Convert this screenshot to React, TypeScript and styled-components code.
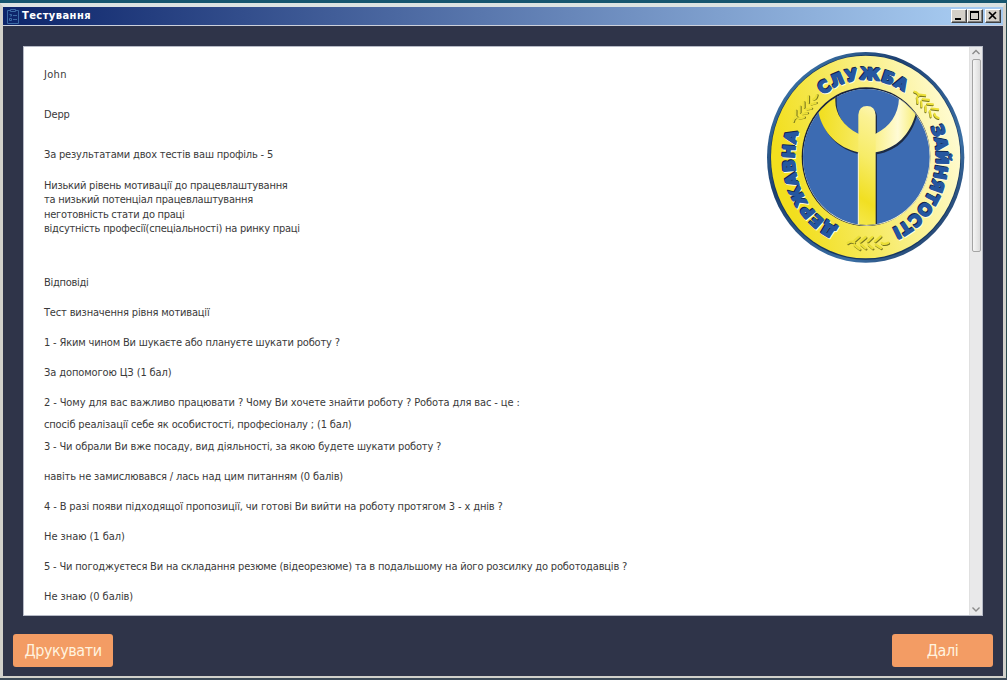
import React from "react";
import styled, { createGlobalStyle } from "styled-components";

const Global = createGlobalStyle`
  * { box-sizing: border-box; }
  html, body, #root { height: 100%; }
  body { margin: 0; overflow: hidden; font-family: "DejaVu Sans Condensed", "DejaVu Sans", sans-serif; }
`;

const Desktop = styled.div`
  width: 1007px;
  height: 680px;
  padding: 3px 1px 2px 0;
  background: linear-gradient(#17566f 0 3px, #2b4a4e 3px 677px, #3c4a58 677px);
`;

const Window = styled.main`
  height: 675px;
  display: flex;
  flex-direction: column;
  border: solid #d2d1cb;
  border-width: 4px 3px 2px 3px;
  border-top-color: #dde3e2;
  background: #2f3449;
`;

const TitleBar = styled.header`
  height: 19px;
  flex: none;
  display: flex;
  align-items: center;
  padding: 0 2px 0 3px;
  border-bottom: 1px solid #cbd0dc;
  background: linear-gradient(90deg, #0c246a, #a6caf0 96%);
`;

const Title = styled.h1`
  flex: 1;
  margin: 0 0 0 2px;
  font-size: 11px;
  line-height: 18px;
  letter-spacing: 0.45px;
  color: #fff;
`;

const WinButton = styled.span<{ $gap?: number }>`
  width: 16px;
  height: 14px;
  margin-left: ${(p) => p.$gap ?? 0}px;
  border: 1px solid;
  border-color: #fff #404040 #404040 #fff;
  box-shadow: inset -1px -1px #808080;
  background: #d4d0c8;
  svg { display: block; }
`;

const Body = styled.div`
  flex: 1;
  padding: 20px 19px 0 20px;
`;

const Panel = styled.section`
  width: 960px;
  height: 570px;
  display: flex;
  background: #fff;
  border: 1px solid #b6bac6;
`;

const Report = styled.div`
  width: 743px;
  padding: 21px 0 0 20px;
`;

const Line = styled.p<{ $gap: number; $track: number }>`
  margin: ${(p) => p.$gap}px 0 0;
  height: 14px;
  font-size: 11px;
  line-height: 14px;
  letter-spacing: ${(p) => p.$track}px;
  white-space: nowrap;
  color: #3a3a3a;
`;

const Emblem = styled.svg`
  width: 198px;
  height: 213px;
  margin: 4px 4px 0 0;
  flex: none;
`;

const ScrollBar = styled.div`
  width: 13px;
  display: flex;
  flex-direction: column;
  align-items: center;
  background: #e9e9ea;
  border-left: 1px solid #e0e0e0;
  > svg { display: block; flex: none; }
`;

const Thumb = styled.div`
  width: 9px;
  height: 193px;
  border: 1px solid #a4a4a4;
  border-radius: 2px;
  background: linear-gradient(90deg, #f6f6f6, #dcdcdc);
`;

const Spacer = styled.div`
  flex: 1;
`;

const Footer = styled.footer`
  height: 60px;
  flex: none;
  display: flex;
  justify-content: space-between;
  align-items: flex-start;
  padding: 18px 10px 0;
`;

const Action = styled.button<{ $w: number }>`
  width: ${(p) => p.$w}px;
  height: 33px;
  padding: 0;
  border: 0;
  border-radius: 3px;
  background: #f39c64;
  color: #fff3df;
  font: 16px/33px "DejaVu Sans Condensed", sans-serif;
  letter-spacing: -0.45px;
`;

const lines: [string, number, number][] = [
  ["John", 0, 0.3],
  ["Depp", 26, -0.15],
  ["За результатами двох тестів ваш профіль - 5", 26, -0.18],
  ["Низький рівень мотивації до працевлаштування", 17, -0.23],
  ["та низький потенціал працевлаштування", 0, -0.25],
  ["неготовність стати до праці", 1, -0.27],
  ["відсутність професії(спеціальності) на ринку праці", 0, -0.23],
  ["Відповіді", 40, -0.28],
  ["Тест визначення рівня мотивації", 16, -0.17],
  ["1 - Яким чином Ви шукаєте або плануєте шукати роботу ?", 16, -0.17],
  ["За допомогою ЦЗ (1 бал)", 16, -0.11],
  ["2 - Чому для вас важливо працювати ? Чому Ви хочете знайти роботу ? Робота для вас - це :", 16, -0.115],
  ["спосіб реалізації себе як особистості, професіоналу ; (1 бал)", 8, -0.15],
  ["3 - Чи обрали Ви вже посаду, вид діяльності, за якою будете шукати роботу ?", 8, -0.165],
  ["навіть не замислювався / лась над цим питанням (0 балів)", 16, -0.145],
  ["4 - В разі появи підходящої пропозиції, чи готові Ви вийти на роботу протягом 3 - х днів ?", 16, -0.13],
  ["Не знаю (1 бал)", 16, -0.05],
  ["5 - Чи погоджуєтеся Ви на складання резюме (відеорезюме) та в подальшому на його розсилку до роботодавців ?", 16, -0.18],
  ["Не знаю (0 балів)", 16, -0.06],
];

const rad = (d: number) => (d * Math.PI) / 180;
const arc = (from: number, to: number) => {
  const pt = (t: number) => `${317 + 213 * Math.sin(rad(t))} ${337 - 232 * Math.cos(rad(t))}`;
  return `M${pt(from)}A213 232 0 0 1 ${pt(to)}`;
};

const words = [
  { id: "top", text: "СЛУЖБА", from: -37, to: 50, len: 262 },
  { id: "right", text: "ЗАЙНЯТОСТІ", from: 67, to: 175, len: 360 },
  { id: "left", text: "ДЕРЖАВНА", from: 203, to: 302, len: 340 },
];

function Sprig({ x, y, angle }: { x: number; y: number; angle: number }) {
  const leaves = (
    <path d="M-60 2Q-50-6-40 1M42 2Q50 8 62 1M-42-3L-26-17M-22-2L-6-16M14-16L0-3M39-18L22-3M-40 8L-24 20M-20 7L-6 18M2 7L15 18M24 7L40 17" />
  );
  const scale = angle ? 0.88 : 1;
  return (
    <g transform={`translate(${x} ${y}) rotate(${angle}) scale(${scale})`} fill="none" strokeLinecap="round" strokeWidth="7">
      <g stroke="#77751f" transform="translate(2 3)">{leaves}</g>
      <g stroke="#ebdf38">{leaves}</g>
    </g>
  );
}

function Logo() {
  return (
    <Emblem viewBox="21 18 594 639" preserveAspectRatio="none">
      <defs>
        <linearGradient id="rim" x1="0" y1="0" x2="1" y2="1">
          <stop offset="0" stopColor="#4a8dc4" />
          <stop offset=".35" stopColor="#1d4070" />
          <stop offset=".7" stopColor="#3a6fa5" />
          <stop offset="1" stopColor="#16284c" />
        </linearGradient>
        <linearGradient id="ring" x1=".1" y1=".7" x2="1" y2=".45">
          <stop offset="0" stopColor="#f2df1e" />
          <stop offset=".3" stopColor="#f5e750" />
          <stop offset=".65" stopColor="#faf191" />
          <stop offset="1" stopColor="#fffbd0" />
        </linearGradient>
        <linearGradient id="stem" gradientUnits="userSpaceOnUse" x1="240" y1="500" x2="440" y2="180">
          <stop offset="0" stopColor="#f5e84a" />
          <stop offset=".18" stopColor="#f1df22" />
          <stop offset=".48" stopColor="#f7ec68" />
          <stop offset=".75" stopColor="#fbf294" />
          <stop offset="1" stopColor="#fffce0" />
        </linearGradient>
        <linearGradient id="arms" gradientUnits="userSpaceOnUse" x1="180" y1="0" x2="465" y2="0">
          <stop offset="0" stopColor="#f1df20" />
          <stop offset=".5" stopColor="#f8ed72" />
          <stop offset=".82" stopColor="#fffbd5" />
          <stop offset="1" stopColor="#f8ee79" />
        </linearGradient>
        <clipPath id="disc"><ellipse cx="319" cy="336" rx="190" ry="204" /></clipPath>
        {words.map((w) => <path key={w.id} id={w.id} d={arc(w.from, w.to)} />)}
      </defs>
      <ellipse cx="317" cy="337" rx="296" ry="316" fill="url(#rim)" />
      <ellipse cx="317" cy="337" rx="286" ry="307" fill="#16365f" />
      <ellipse cx="317" cy="336" rx="284" ry="304" fill="url(#ring)" />
      <ellipse cx="318" cy="335" rx="193" ry="208" fill="#18213a" />
      <ellipse cx="320" cy="337" rx="191" ry="205" fill="#fffbd0" />
      <ellipse cx="319" cy="336" rx="190" ry="204" fill="#3c6bb2" />
      <g clipPath="url(#disc)">
        <g transform="translate(4 6)" fill="#1c2b46">
          <path d="M174 140H226V168C226 205 250 245 295 266V208Q298 183 321 183Q344 183 347 208V266C390 246 415 209 417 160L430 130L490 190L468 204C450 270 410 310 347 322V560H295V322C232 308 190 264 176 205Z" />
        </g>
        <path d="M174 130H226V168C226 205 250 245 295 266L321 280L347 266C390 246 415 209 417 160V130H490L468 204C450 270 410 310 347 322H295C232 308 190 264 176 205Z" fill="url(#arms)" />
        <path d="M295 560V210Q297 183 321 183Q345 183 347 210V560Z" fill="url(#stem)" />
        <path d="M295 322V560" stroke="#fffbd5" strokeWidth="3" />
      </g>
      {[{ d: 3, c: "#fffce0" }, { d: -3, c: "#13264b" }, { d: 0, c: "#2557a0" }].map((layer) => (
        <g key={layer.d} transform={`translate(${layer.d} ${layer.d})`} fill={layer.c} stroke={layer.c} strokeWidth="4" strokeLinejoin="round">
          {words.map((w) => (
            <text key={w.id} fontFamily="DejaVu Sans" fontWeight="700" fontSize="49" textLength={w.len} lengthAdjust="spacing">
              <textPath href={`#${w.id}`}>{w.text}</textPath>
            </text>
          ))}
        </g>
      ))}
      <Sprig x={133} y={190} angle={-48} />
      <Sprig x={500} y={178} angle={48} />
      <Sprig x={323} y={592} angle={0} />
    </Emblem>
  );
}

export default function App() {
  return (
    <Desktop>
      <Global />
      <Window>
        <TitleBar>
          <svg width="14" height="17" viewBox="0 0 14 17" fill="none" stroke="#3b6aa5">
            <path d="M4 2.5H1.5V15.5H12.5V2.5H10M4.5 1.5H9.5V3.5H4.5ZM3.5 6.5H5.5V8H4M7 7.5H11M3.5 10.5H5.5V12.5H3.5ZM7 11.5H11" />
          </svg>
          <Title>Тестування</Title>
          <WinButton><svg width="14" height="12"><path d="M3 8h6v2H3z" /></svg></WinButton>
          <WinButton>
            <svg width="14" height="12"><path d="M2 1h9v9H2zM3 3v6h7V3z" fillRule="evenodd" /></svg>
          </WinButton>
          <WinButton $gap={2}>
            <svg width="14" height="12"><path d="M3 2l7 7M10 2L3 9" stroke="#000" strokeWidth="1.7" /></svg>
          </WinButton>
        </TitleBar>
        <Body>
          <Panel>
            <Report>
              {lines.map(([text, gap, track]) => (
                <Line key={text} $gap={gap} $track={track}>{text}</Line>
              ))}
            </Report>
            <Logo />
            <ScrollBar>
              <svg width="12" height="12" fill="none" stroke="#8a8a8a" strokeWidth="1.4"><path d="M2.5 7L6 3.5L9.5 7" /></svg>
              <Thumb />
              <Spacer />
              <svg width="12" height="12" fill="none" stroke="#8a8a8a" strokeWidth="1.4"><path d="M2.5 4.5L6 8L9.5 4.5" /></svg>
            </ScrollBar>
          </Panel>
        </Body>
        <Footer>
          <Action $w={100}>Друкувати</Action>
          <Action $w={101}>Далі</Action>
        </Footer>
      </Window>
    </Desktop>
  );
}
